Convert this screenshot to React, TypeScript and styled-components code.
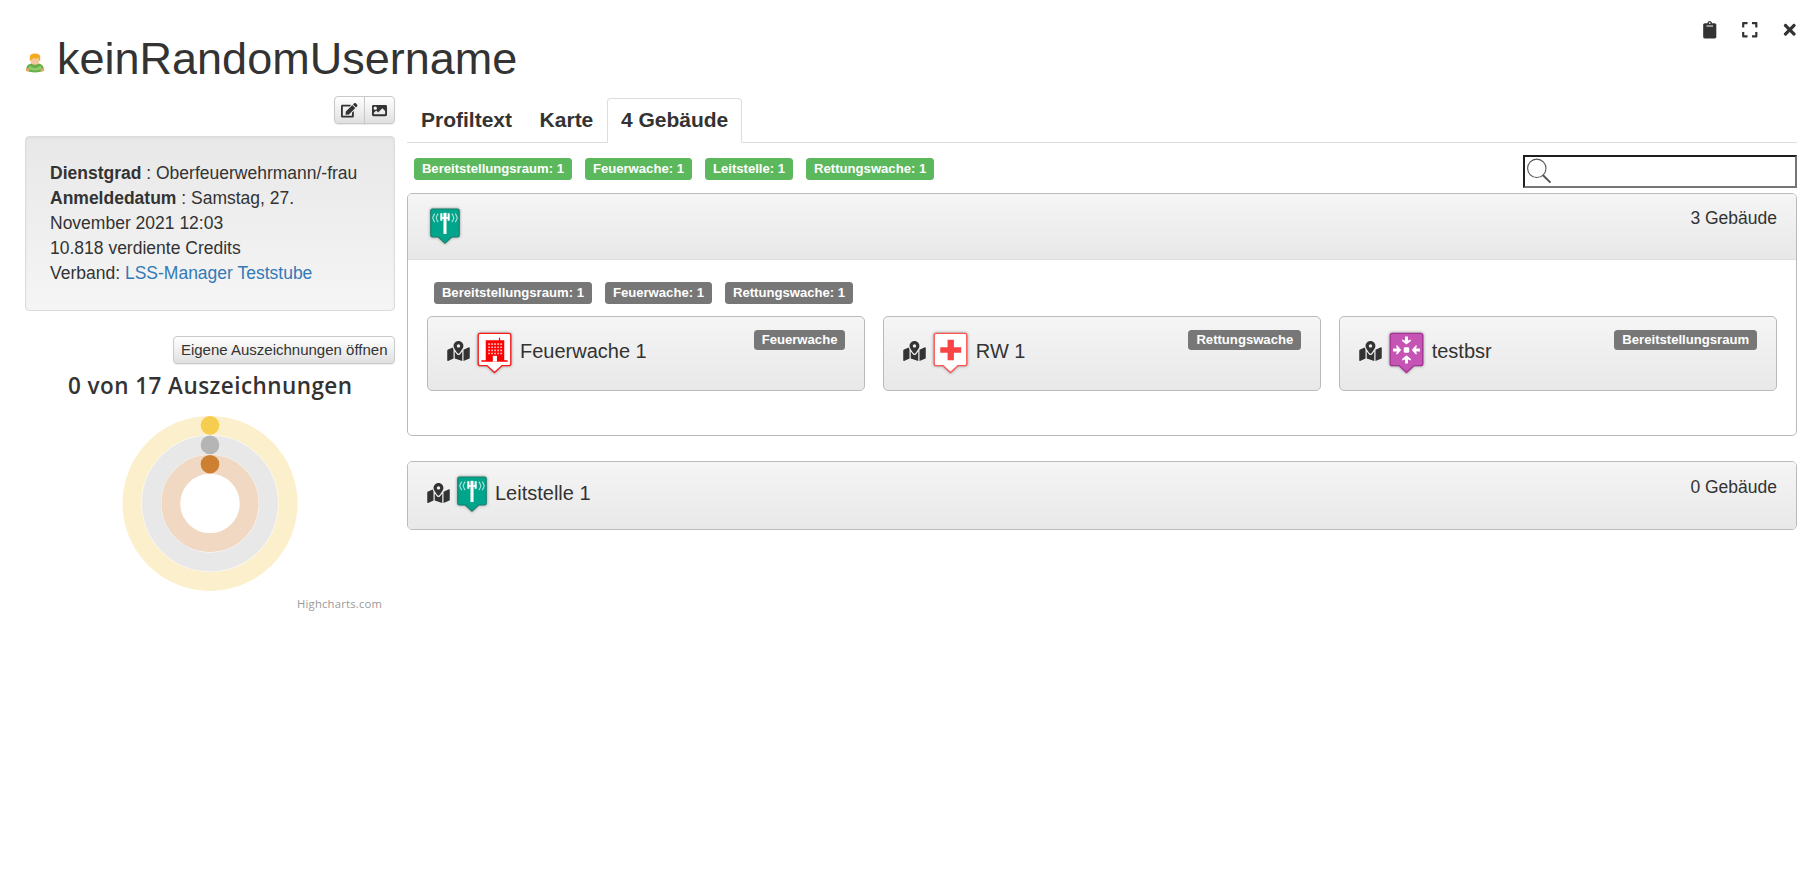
import React from 'react';
import styled, { createGlobalStyle } from 'styled-components';
import { FaClipboard, FaExpand, FaTimes, FaEdit, FaImage, FaMapMarkedAlt } from 'react-icons/fa';

const GlobalStyle = createGlobalStyle`
  * { box-sizing: border-box; }
  body {
    margin: 0;
    background: #fff;
    color: #333;
    font: 17.5px/25px "Liberation Sans", Arial, sans-serif;
  }
  svg { display: block; flex: none; }
`;

const Page = styled.div`
  padding: 0 20px 0 25px;
`;

const Header = styled.header`
  display: flex;
  justify-content: space-between;
  height: 96px;
`;

const Title = styled.h1`
  display: flex;
  align-items: flex-start;
  gap: 12px;
  margin: 0;
  padding-top: 34px;
  font-size: 45px;
  line-height: 50px;
  font-weight: 400;
  svg { margin-top: 18px; }
`;

const WindowActions = styled.div`
  display: flex;
  align-items: center;
  gap: 22.8px;
  height: 18px;
  margin: 21px -1.75px 0 0;
`;

const Columns = styled.div`
  display: flex;
  gap: 12px;
  align-items: flex-start;
`;

const Sidebar = styled.aside`
  width: 370px;
  flex: none;
  display: flex;
  flex-direction: column;
`;

const ButtonGroup = styled.div`
  display: flex;
  align-self: flex-end;
`;

const Button = styled.button<{ $side?: 'left' | 'right' }>`
  display: flex;
  align-items: center;
  justify-content: center;
  height: 28px;
  margin: 0 0 0 ${p => (p.$side === 'right' ? '-1px' : '0')};
  padding: 0 ${p => (p.$side === 'right' ? '7px' : '6.5px')};
  border: 1px solid #c9c9c9;
  border-radius: ${p => (p.$side === 'left' ? '4px 0 0 4px' : p.$side === 'right' ? '0 4px 4px 0' : '4px')};
  background: linear-gradient(#fff, #e0e0e0);
  box-shadow: 0 1px 1px rgba(0, 0, 0, 0.08);
  color: #333;
  font: 15px/22px "Liberation Sans", Arial, sans-serif;
  white-space: nowrap;
`;

const Well = styled.section`
  height: 175px;
  margin: 12px 0 25px;
  padding: 24px;
  border: 1px solid #dcdcdc;
  border-radius: 4px;
  background: linear-gradient(#e8e8e8, #f5f5f5);
  box-shadow: inset 0 1px 3px rgba(0, 0, 0, 0.05);
`;

const InfoLine = styled.div`
  line-height: 25px;
`;

const AllianceLink = styled.a`
  color: #337ab7;
  text-decoration: none;
`;

const AwardButtonRow = styled.div`
  display: flex;
  justify-content: flex-end;
`;

const Main = styled.main`
  flex: 1;
  min-width: 0;
  padding-top: 2px;
`;

const Tabs = styled.nav`
  display: flex;
  gap: 0.6px;
  height: 45px;
  padding-left: 0.5px;
  border-bottom: 1px solid #ddd;
`;

const Tab = styled.a<{ $active?: boolean }>`
  height: 45px;
  padding: 6px 12.5px 0;
  border: 1px solid ${p => (p.$active ? '#ddd' : 'transparent')};
  border-bottom-color: ${p => (p.$active ? '#fff' : 'transparent')};
  border-radius: 4px 4px 0 0;
  font-size: 21px;
  line-height: 30px;
  font-weight: 700;
`;

const FilterRow = styled.div`
  display: flex;
  justify-content: space-between;
  align-items: flex-start;
  height: 50px;
  padding: 12px 0 0 7px;
`;

const Labels = styled.div`
  display: flex;
  gap: 13.2px;
`;

const Label = styled.span<{ $tone?: 'green'; $short?: boolean }>`
  height: ${p => (p.$short ? '20px' : '22px')};
  padding: 0 7.9px;
  border-radius: 3.5px;
  background: ${p => (p.$tone === 'green' ? '#5cb85c' : '#777')};
  color: #fff;
  font-size: 13.125px;
  line-height: ${p => (p.$short ? '20px' : '22px')};
  font-weight: 700;
  white-space: nowrap;
`;

const LabelLine = styled.div`
  padding-top: 3px;
`;

const SearchBox = styled.div`
  width: 274px;
  height: 33px;
  padding: 1px 2px;
  border: 2px solid;
  border-color: #1f1f1f #767676 #767676 #1f1f1f;
  background: #fff;
`;

const Panel = styled.section<{ $height: number }>`
  height: ${p => p.$height}px;
  margin-bottom: 25px;
  border: 1px solid #bbb;
  border-radius: 5px;
  overflow: hidden;
`;

const PanelHead = styled.header<{ $closed?: boolean }>`
  display: flex;
  justify-content: space-between;
  height: ${p => (p.$closed ? '67px' : '66px')};
  padding: 12px 19px 0 ${p => (p.$closed ? '19px' : '20px')};
  border-bottom: ${p => (p.$closed ? '0' : '1px solid #ddd')};
  background: linear-gradient(#f5f5f5, #e8e8e8);
`;

const PanelBody = styled.div`
  padding: 22px 19px 0;
`;

const SubLabels = styled(Labels)`
  padding-left: 7px;
`;

const Cards = styled.div`
  display: grid;
  grid-template-columns: repeat(3, 1fr);
  gap: 17.5px;
  margin-top: 12px;
`;

const Card = styled.article`
  display: flex;
  justify-content: space-between;
  align-items: flex-start;
  height: 75px;
  padding: 13px 19px 0;
  border: 1px solid #bbb;
  border-radius: 5px;
  background: linear-gradient(#f5f5f5, #e8e8e8);
`;

const MapIcon = styled(FaMapMarkedAlt)`
  width: 23px;
  height: 20px;
  margin-right: 5px;
`;

const BuildingName = styled.span`
  margin-left: 6px;
`;

const Building = styled.div<{ $textTop: number }>`
  display: flex;
  align-items: flex-start;
  font-size: 20px;
  line-height: 22px;
  ${MapIcon} { margin-top: ${p => p.$textTop + 1}px; }
  ${BuildingName} { margin-top: ${p => p.$textTop}px; }
`;

const Count = styled.span<{ $low?: boolean }>`
  height: 25px;
  margin-top: ${p => (p.$low ? '1px' : '0')};
`;

const pinShape = 'M5.300 3.500h29.400q2 0 2 2v29q0 2-2 2h-7L20 43.700l-7.700-7.200h-7q-2 0-2-2v-29q0-2 2-2z';

type PinKind = 'control' | 'fire' | 'rescue' | 'staging';

const pinColors: Record<PinKind, [string, string]> = {
  control: ['#00a58c', '#16806f'],
  fire: ['#fff', '#f81c1c'],
  rescue: ['#fff', '#f55'],
  staging: ['#c554b4', '#a23593'],
};

const PinSvg = styled.svg`
  filter: drop-shadow(0 0 1.5px rgba(0, 0, 0, 0.4));
`;

function Pin({ kind, size = 39 }: { kind: PinKind; size?: number }) {
  const [fill, stroke] = pinColors[kind];
  return (
    <PinSvg width={size} height={size * 1.175} viewBox="0 0 40 47">
      <path d={pinShape} fill={fill} stroke={stroke} strokeWidth="1.400" />
      {kind === 'control' && (
        <g fill="none" stroke="#fff">
          <path d="M20 8v25" strokeWidth="3.600" />
          <path d="M15.700 8.500v9M24.300 8.500v9" strokeWidth="2.400" />
          <path d="M15 14h10" strokeWidth="2" />
          <path d="M12 9q-1 1-2.500 5 1.500 4 2.500 5M8 9q-1 1-2.500 5Q7 18 8 19M28 9q1 1 2.500 5-1.500 4-2.500 5M32 9q1 1 2.500 5-1.500 4-2.500 5" strokeWidth="1.300" opacity=".7" />
        </g>
      )}
      {kind === 'fire' && (
        <g>
          <path d="M11 10.500h13.500V8h1.300v2.500H30v20.500h3.500V32.500h-27V31H11z" fill="#f00" />
          <path d="M13.500 14.500h14.500M13.500 17.700h14.500M13.500 20.900h14.500M13.500 24.100h14.500" stroke="#fff" strokeWidth="1.700" strokeDasharray="1.900 1.200" opacity=".7" />
          <path d="M18.300 26.500h4.200v6h-4.200z" fill="#fff" />
        </g>
      )}
      {kind === 'rescue' && <path d="M17 10h6.500v7.700H31v5.600h-7.500V31H17v-7.700H9.500v-5.600H17z" fill="#f84444" />}
      {kind === 'staging' && (
        <g fill="#fff">
          <rect x="17.200" y="17.700" width="5.600" height="5.600" rx="1.300" />
          {[0, 90, 180, 270].map(a => (
            <path key={a} transform={`rotate(${a} 20 20.500)`} d="M18.500 6.700h3v4l3-1v1.500L20 15l-4.500-3.800V9.700l3 1z" />
          ))}
        </g>
      )}
    </PinSvg>
  );
}

function UserIcon() {
  return (
    <svg width="20" height="21" viewBox="0 0 20 21">
      <path d="M1.200 18.800q-.7-5.800 4.800-7.300h8q5.500 1.500 4.800 7.300-4 1.700-8.800 1.700t-8.800-1.700z" fill="#68ad4a" />
      <path d="M4.500 13.500q5.500 5 11 0l1 3.500q-6.500 3-13 0z" fill="#8ecb6b" />
      <circle cx="2.700" cy="17.800" r="1.800" fill="#eda45c" />
      <circle cx="17.300" cy="17.800" r="1.800" fill="#eda45c" />
      <rect x="5.800" y="4" width="8.400" height="8.800" rx="3.800" fill="#f5c79c" />
      <path d="M4.800 9.500V5q0-3.500 5.200-3.500T15.200 5v4.500q-1.300-.8-1.500-3.200H8.500Q6.300 7 4.800 9.500z" fill="#f5a91f" />
    </svg>
  );
}

function SearchIcon() {
  return (
    <svg width="25" height="26" viewBox="0 0 25 26">
      <circle cx="9.800" cy="10.300" r="9.200" fill="none" stroke="#555" strokeWidth="1.100" />
      <path d="M16 17.300l7.500 7.300" stroke="#555" strokeWidth="2" />
    </svg>
  );
}

const rings = [
  { r: 78, track: '#fcefcb', dot: '#f7cd50' },
  { r: 58.5, track: '#e8e8e8', dot: '#b5b5b5' },
  { r: 39.2, track: '#f0d8c2', dot: '#cd7f32' },
];

function AwardsChart() {
  return (
    <svg width="370" height="250" viewBox="0 0 370 250" fontFamily='"Open Sans", "Noto Sans", sans-serif'>
      <text x="43" y="30" fontSize="22.500" fontWeight="600" textLength="284" fill="#333">0 von 17 Auszeichnungen</text>
      {rings.map(ring => (
        <g key={ring.r}>
          <circle cx="185" cy="139.400" r={ring.r} fill="none" stroke={ring.track} strokeWidth="19" />
          <circle cx="185" cy={139.4 - ring.r} r="9.300" fill={ring.dot} />
        </g>
      ))}
      <text x="272" y="244" fontSize="11.250" textLength="85" fill="#999">Highcharts.com</text>
    </svg>
  );
}

const buildings: { kind: PinKind; name: string; type: string }[] = [
  { kind: 'fire', name: 'Feuerwache 1', type: 'Feuerwache' },
  { kind: 'rescue', name: 'RW 1', type: 'Rettungswache' },
  { kind: 'staging', name: 'testbsr', type: 'Bereitstellungsraum' },
];

export default function App() {
  return (
    <Page>
      <GlobalStyle />
      <Header>
        <Title><UserIcon />keinRandomUsername</Title>
        <WindowActions>
          <FaClipboard size={17.5} />
          <FaExpand size={17.5} />
          <FaTimes size={17.5} />
        </WindowActions>
      </Header>
      <Columns>
        <Sidebar>
          <ButtonGroup>
            <Button $side="left"><FaEdit size={16.5} /></Button>
            <Button $side="right"><FaImage size={15} /></Button>
          </ButtonGroup>
          <Well>
            <InfoLine><b>Dienstgrad</b> : Oberfeuerwehrmann/-frau</InfoLine>
            <InfoLine><b>Anmeldedatum</b> : Samstag, 27. November 2021 12:03</InfoLine>
            <InfoLine>10.818 verdiente Credits</InfoLine>
            <InfoLine>Verband: <AllianceLink>LSS-Manager Teststube</AllianceLink></InfoLine>
          </Well>
          <AwardButtonRow><Button>Eigene Auszeichnungen öffnen</Button></AwardButtonRow>
          <AwardsChart />
        </Sidebar>
        <Main>
          <Tabs>
            <Tab>Profiltext</Tab>
            <Tab>Karte</Tab>
            <Tab $active>4 Gebäude</Tab>
          </Tabs>
          <FilterRow>
            <LabelLine>
              <Labels>
                <Label $tone="green">Bereitstellungsraum: 1</Label>
                <Label $tone="green">Feuerwache: 1</Label>
                <Label $tone="green">Leitstelle: 1</Label>
                <Label $tone="green">Rettungswache: 1</Label>
              </Labels>
            </LabelLine>
            <SearchBox><SearchIcon /></SearchBox>
          </FilterRow>
          <Panel $height={243}>
            <PanelHead>
              <Pin kind="control" size={34} />
              <Count>3 Gebäude</Count>
            </PanelHead>
            <PanelBody>
              <SubLabels>
                <Label>Bereitstellungsraum: 1</Label>
                <Label>Feuerwache: 1</Label>
                <Label>Rettungswache: 1</Label>
              </SubLabels>
              <Cards>
                {buildings.map(b => (
                  <Card key={b.name}>
                    <Building $textTop={10}>
                      <MapIcon /><Pin kind={b.kind} /><BuildingName>{b.name}</BuildingName>
                    </Building>
                    <Label $short>{b.type}</Label>
                  </Card>
                ))}
              </Cards>
            </PanelBody>
          </Panel>
          <Panel $height={69}>
            <PanelHead $closed>
              <Building $textTop={8}>
                <MapIcon /><Pin kind="control" size={34} /><BuildingName>Leitstelle 1</BuildingName>
              </Building>
              <Count $low>0 Gebäude</Count>
            </PanelHead>
          </Panel>
        </Main>
      </Columns>
    </Page>
  );
}
